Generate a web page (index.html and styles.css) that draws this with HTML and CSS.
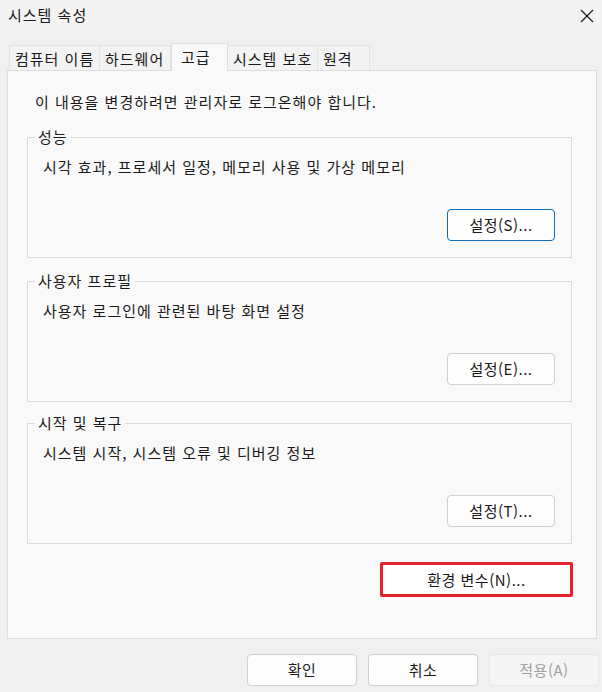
FILE: index.html
```html
<!DOCTYPE html>
<html lang="ko">
<head>
<meta charset="utf-8">
<link rel="stylesheet" href="styles.css">
</head>
<body>
<div class="window">
  <div class="titlebar">
    <span class="title">시스템 속성</span>
    <svg class="close" width="14" height="14" viewBox="0 0 14 14"><path d="M1 1 L13 13 M13 1 L1 13" stroke="#1a1a1a" stroke-width="1.2" fill="none"/></svg>
  </div>
  <div class="tabs">
    <div class="tab t1">컴퓨터 이름</div>
    <div class="tab t2">하드웨어</div>
    <div class="tab active t3">고급</div>
    <div class="tab t4">시스템 보호</div>
    <div class="tab t5">원격</div>
  </div>
  <div class="panel">
    <div class="notice">이 내용을 변경하려면 관리자로 로그온해야 합니다.</div>
    <div class="group g1">
      <div class="legend">성능</div>
      <div class="desc">시각 효과, 프로세서 일정, 메모리 사용 및 가상 메모리</div>
      <div class="btn focus">설정(S)...</div>
    </div>
    <div class="group g2">
      <div class="legend">사용자 프로필</div>
      <div class="desc">사용자 로그인에 관련된 바탕 화면 설정</div>
      <div class="btn">설정(E)...</div>
    </div>
    <div class="group g3">
      <div class="legend">시작 및 복구</div>
      <div class="desc">시스템 시작, 시스템 오류 및 디버깅 정보</div>
      <div class="btn">설정(T)...</div>
    </div>
    <div class="envrow">
      <div class="envbtn">환경 변수(N)...</div>
    </div>
  </div>
  <div class="footer">
    <div class="btn fbtn">확인</div>
    <div class="btn fbtn">취소</div>
    <div class="btn fbtn disabled">적용(A)</div>
  </div>
</div>
</body>
</html>
```

FILE: styles.css
```css
* { box-sizing: border-box; }
html, body {
  margin: 0;
  padding: 0;
  background: #f0f0f0;
}
body {
  font-family: "Noto Sans CJK KR", "Noto Sans", sans-serif;
  font-size: 15px;
  letter-spacing: 1px;
  color: #1a1a1a;
  width: 602px;
  height: 692px;
  overflow: hidden;
}
.window {
  display: flex;
  flex-direction: column;
  height: 692px;
}
.titlebar {
  height: 32px;
  background: #f3f3f3;
  display: flex;
  align-items: center;
  justify-content: space-between;
  padding: 0 8px 3px 8px;
  line-height: 20px;
}
.title { font-size: 15px; }
.close { margin-top: 2px; }
.tabs {
  display: flex;
  align-items: flex-end;
  padding-left: 9px;
  margin-top: 11px;
  height: 27px;
  position: relative;
  z-index: 1;
}
.tab {
  height: 25px;
  line-height: 25px;
  padding-left: 5px;
  background: #f3f3f3;
  border: 1px solid #e3e3e3;
  border-bottom: none;
  white-space: nowrap;
  overflow: hidden;
}
.tab + .tab { border-left: none; }
.t1 { width: 91px; }
.t2 { width: 71px; }
.t3 { width: 57px; }
.t4 { width: 90px; border-left: none; }
.t5 { width: 52px; }
.tab.active {
  height: 28px;
  margin-bottom: -1px;
  line-height: 25px;
  padding-left: 9px;
  background: #f9f9f9;
  border: 1px solid #e0e0e0;
  border-bottom: none;
}
.panel {
  margin-left: 7px;
  width: 590px;
  height: 569px;
  background: #f9f9f9;
  border: 1px solid #dedede;
  padding: 21px 0 0 19px;
  display: flex;
  flex-direction: column;
}
.notice {
  line-height: 20px;
  padding-left: 8px;
}
.group {
  width: 545px;
  height: 121px;
  border: 1px solid #dcdcdc;
  display: flex;
  flex-direction: column;
  padding: 0 16px 16px 15px;
}
.g1 { margin-top: 25px; }
.g2 { margin-top: 23px; }
.g3 { margin-top: 21px; }
.legend {
  align-self: flex-start;
  margin-top: -11px;
  margin-left: -8px;
  padding: 0 3px;
  background: #f9f9f9;
  line-height: 20px;
}
.desc {
  margin-top: 10px;
  line-height: 20px;
}
.btn {
  width: 108px;
  height: 32px;
  border: 1px solid #d0d0d0;
  border-radius: 4px;
  background: #fdfdfd;
  display: flex;
  align-items: center;
  justify-content: center;
  line-height: 20px;
  padding-bottom: 1px;
  letter-spacing: 0.5px;
}
.group .btn {
  margin-top: auto;
  align-self: flex-end;
}
.btn.focus {
  border: 1px solid #0f6cbd;
  background: #fefefe;
}
.envrow {
  display: flex;
  justify-content: flex-end;
  width: 546px;
  margin-top: 18px;
}
.envbtn {
  width: 193px;
  height: 35px;
  border: 3px solid #e3222a;
  border-radius: 2px;
  background: #ffffff;
  display: flex;
  align-items: center;
  justify-content: center;
  line-height: 20px;
  letter-spacing: 0.5px;
}
.footer {
  display: flex;
  justify-content: flex-end;
  gap: 11px;
  padding: 15px 3px 0 0;
}
.fbtn {
  width: 110px;
}
.fbtn.disabled {
  background: #f5f5f5;
  border-color: #e6e6e6;
  color: #a0a0a0;
}
```
